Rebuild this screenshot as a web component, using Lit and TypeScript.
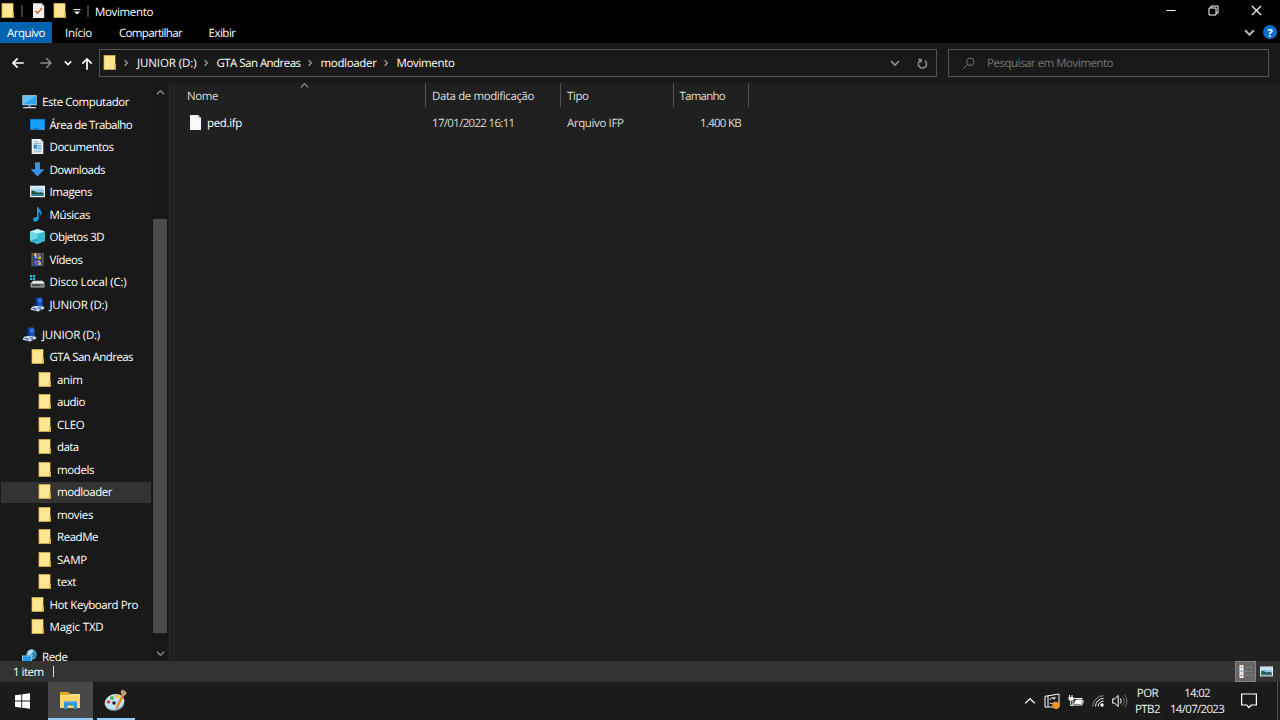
import { LitElement, html, svg, css, nothing } from "lit";
import type { TemplateResult } from "lit";
import { customElement, property } from "lit/decorators.js";
import { classMap } from "lit/directives/class-map.js";

const FONT = '11.5px "Open Sans", "Noto Sans", sans-serif';

const ruler = document.createElement("canvas").getContext("2d")!;

/** Tracking that makes `text` advance over `width` pixels. */
function tracking(text: string, width: number) {
  ruler.font = FONT;
  return (width - ruler.measureText(text).width) / text.length;
}

function label(text: string, width: number, cls = "") {
  return html`<span
    class="label ${cls}"
    style="letter-spacing:${tracking(text, width).toFixed(3)}px"
    >${text}</span
  >`;
}

/** Small colour icons, all drawn in a 15 by 15 box. */
const ICONS: Record<string, TemplateResult> = {
  folder: svg`
    <path d="M1.500 0H13.500V9h.5v6H1.500z" fill="#b8932c"/>
    <path d="M2.200.7H13v8.700h-.9v4.900H2.200z" fill="#ffe695"/>
    <path d="M2.200.7h1v13.600h-1z" fill="#f6d468"/>
    <path d="M12.200 9.800h1.300v4.500h-1.300z" fill="#f3cb52"/>`,
  computer: svg`
    <path d="M.3 1.200h14.400v10H.3z" fill="#a9ddf8"/>
    <path d="M1 2h13v8.400H1z" fill="#2fa5ec"/>
    <path d="M1 10.400V2h13z" fill="#62c2f6"/>
    <path d="M6 11.200h3v1.600H6z" fill="#7f97a5"/>
    <path d="M1.500 13h12l1 1.200H.5z" fill="#c9d6dd"/>`,
  desktop: svg`
    <path d="M0 2h15v11H0z" fill="#0078d0"/>
    <path d="M.8 2.700h13.400v8.500H.8z" fill="#1a9dfa"/>
    <path d="M1.500 12h1M9.500 12h1M11.500 12h1M13 12h1" stroke="#bfe3ff" stroke-width=".9"/>`,
  document: svg`
    <path d="M1.700 0h9l2.600 2.700V15H1.700z" fill="#f2f4f5"/>
    <path d="M10.600 0v2.800h2.700z" fill="#a8b1b7"/>
    <path d="M3.700 2.600h4.600M3.700 4.400h8M3.700 11h8M3.700 12.800h8" stroke="#6fa6c8" stroke-width=".8"/>
    <path d="M3.500 5.600h3.800v4H3.500z" fill="#2b8ed0"/>
    <path d="M8 6.300h3.800M8 7.900h3.800M8 9.400h3.800" stroke="#3a91c9" stroke-width=".8"/>`,
  download: svg`<path d="M5 .3h5v7h4.400L7.500 14.600.6 7.300H5z" fill="#3593e3"/>`,
  picture: svg`
    <path d="M0 1.700h15v11.500H0z" fill="#e8edf0"/>
    <path d="M1.400 3h12.200v8.800H1.400z" fill="#8fc9ee"/>
    <path d="M1.400 3h12.200v2.500H1.400z" fill="#c9e4f5"/>
    <path d="M1.400 6.500q3.500.3 6.200 2.200 3.600-1.100 6 .3v2.800H1.400z" fill="#24553f"/>
    <path d="M1.400 10.200h12.200v1.600H1.400z" fill="#3e7fa8"/>`,
  music: svg`
    <path d="M7 .2h1.600c.3 2.600 3.500 3.400 3.100 6.800-.1 1-.5 1.800-1.100 2.500.6-2.500-.4-3.900-1.900-4.400v6.500c0 1.800-1.500 3.100-3.300 3.100-1.500 0-2.400-.8-2.400-1.900C3 11 4.600 9.900 7 10z" fill="#1b9bf2"/>`,
  cube: svg`
    <path d="M7.500 0 15 2.400v9.700L7.500 15 0 12.100V2.400z" fill="#39b9d6"/>
    <path d="M0 2.400 7.500 0 15 2.400 7.500 4.800z" fill="#c9f3fa"/>
    <path d="M0 2.400 7.500 4.800V15L0 12.100z" fill="#6fd7ea"/>
    <path d="M0 12.100 7.500 9V15z" fill="#2ba8c9"/>`,
  video: svg`
    <path d="M1 .7h13v13.800H1z" fill="#3a3a3a"/>
    <path d="M2.300 1v13M12.700 1v13" stroke="#999" stroke-width="1" stroke-dasharray="1 1.300"/>
    <path d="M4 1.300h7v5.700H4zM4 8h7v5.700H4z" fill="#2f5fd0"/>
    <path d="M4 1.300h3l-1 3H4zM8.500 4.500H11V7H8z" fill="#e3b23c"/>
    <path d="M7.500 1.500h3v2h-3zM5 9h2.500v2H5z" fill="#d4502e"/>
    <path d="M8.500 10.500H11V13H8.500z" fill="#e9c25a"/>
    <path d="M5 4.500h2V6H5zM8 8.500h2V10H8z" fill="#8db6f0"/>`,
  drive: svg`
    <path d="M0 1h2.200v2.200H0zM2.900 1h2.200v2.200H2.900zM0 3.900h2.200v2.200H0zM2.900 3.900h2.200v2.200H2.900z" fill="#15c3ea"/>
    <path d="M3.200 6.700h9.300L14.500 9H1z" fill="#e4e6e7"/>
    <path d="M.7 9h13.800v4.500H.7z" fill="#b9bdbf"/>
    <path d="M1.600 10h12v2.500h-12z" fill="#4c5052"/>
    <path d="M10.500 10.800h1.700v1h-1.700z" fill="#45e04e"/>`,
  usb: svg`
    <path d="M5.300 1.200 10.500 0l2 1.500.3 7.700-6.500 1.200z" fill="#1c50b8"/>
    <path d="M5.300 1.200 7 2l.5 8-1.200.4L4 9z" fill="#0b2c78"/>
    <path d="M8 2.200l3.500-.8.3 3.500-3.600.8z" fill="#3c78dc"/>
    <path d="M2 9.800l4-.8 7.500.4 1 2-6.500 3L.5 12.800z" fill="#cdd9ec"/>
    <path d="M2.500 11.500h3M7.500 11h3.500M4.500 13.300l2-1M9.500 12.800l2-.6" stroke="#2a55a8" stroke-width="1.200"/>`,
  network: svg`
    <circle cx="9.500" cy="5.500" r="5.200" fill="#4c9fc6"/>
    <path d="M6 2.500Q9-.5 11.500 1L9 5.500 5.500 6z" fill="#b6dff0"/>
    <path d="M12 3q2 2 1.500 5l-2.500 1z" fill="#2b6f9a"/>
    <path d="M0 6.500h10V13H0z" fill="#8fd3f7"/>
    <path d="M.8 7.300h8.400v5H.8z" fill="#249ae6"/>`,
  file: svg`
    <path d="M2 0h8l3 3v12H2z" fill="#f7f8f8"/>
    <path d="M10 0v3h3z" fill="#b4b8ba"/>`,
  check: svg`
    <path d="M2 .2h8.800l2.400 2.500V15H2z" fill="#f3f1ef"/>
    <path d="M10.800.2v2.500h2.400z" fill="#a8a8a8"/>
    <path d="m4.200 7.700 2.300 2.600 4.700-5.300" fill="none" stroke="#e8602c" stroke-width="1.400"/>`,
  details: svg`
    <path d="M1.500 1h4v13h-4z" fill="#eee"/>
    <path d="M2.700 2.500h1.600v1.600H2.700z" fill="#999"/>
    <path d="M2.700 6.500h1.600v1.600H2.700z" fill="#4a8fd0"/>
    <path d="M2.700 10.700h1.600v1.600H2.700z" fill="#d2553e"/>
    <path d="M7.300 3.500h3M11.500 3.500h3M7.300 7.500h3M11.500 7.500h3M7.300 11.500h3M11.500 11.500h3" stroke="#8f8f8f" stroke-width=".8"/>`,
};

function icon(name: string, size = 15) {
  return html`<svg class="icon" width=${size} height=${size} viewBox="0 0 15 15">
    ${ICONS[name]}
  </svg>`;
}

function chevron(dir: "up" | "down" | "right", size: number, weight = 1.3) {
  const d = {
    up: "M1 7 5 3l4 4",
    down: "M1 3l4 4 4-4",
    right: "M3.300 1.500 6.800 5 3.300 8.500",
  }[dir];
  return html`<svg class="line" width=${size} height=${size} viewBox="0 0 10 10">
    <path d=${d} stroke-width=${weight} />
  </svg>`;
}

interface TreeItem {
  text: string;
  icon: string;
  level: number;
  width: number;
  selected?: boolean;
}

const TREE: TreeItem[][] = [
  [
    { text: "Este Computador", icon: "computer", level: 0, width: 87 },
    { text: "Área de Trabalho", icon: "desktop", level: 1, width: 82.5 },
    { text: "Documentos", icon: "document", level: 1, width: 64 },
    { text: "Downloads", icon: "download", level: 1, width: 55.5 },
    { text: "Imagens", icon: "picture", level: 1, width: 42.5 },
    { text: "Músicas", icon: "music", level: 1, width: 40.5 },
    { text: "Objetos 3D", icon: "cube", level: 1, width: 54.5 },
    { text: "Vídeos", icon: "video", level: 1, width: 33 },
    { text: "Disco Local (C:)", icon: "drive", level: 1, width: 77 },
    { text: "JUNIOR (D:)", icon: "usb", level: 1, width: 58 },
  ],
  [
    { text: "JUNIOR (D:)", icon: "usb", level: 0, width: 58 },
    { text: "GTA San Andreas", icon: "folder", level: 1, width: 83.5 },
    { text: "anim", icon: "folder", level: 2, width: 25.5 },
    { text: "audio", icon: "folder", level: 2, width: 28 },
    { text: "CLEO", icon: "folder", level: 2, width: 27.5 },
    { text: "data", icon: "folder", level: 2, width: 21.5 },
    { text: "models", icon: "folder", level: 2, width: 37 },
    { text: "modloader", icon: "folder", level: 2, width: 55 },
    { text: "movies", icon: "folder", level: 2, width: 36 },
    { text: "ReadMe", icon: "folder", level: 2, width: 41 },
    { text: "SAMP", icon: "folder", level: 2, width: 30 },
    { text: "text", icon: "folder", level: 2, width: 19 },
    { text: "Hot Keyboard Pro", icon: "folder", level: 1, width: 88.5 },
    { text: "Magic TXD", icon: "folder", level: 1, width: 54 },
  ].map((item) => ({ ...item, selected: item.text === "modloader" })),
  [{ text: "Rede", icon: "network", level: 0, width: 25.5 }],
];

const shared = css`
  :host {
    box-sizing: border-box;
    font: 11.5px/16px "Open Sans", "Noto Sans", sans-serif;
    color: #fff;
  }

  * {
    box-sizing: border-box;
  }

  /* Optical centring: the face sits high in its line box. */
  .label {
    display: block;
    flex: none;
    margin: 1px 0 -1px;
    white-space: pre;
    text-rendering: geometricPrecision;
  }

  .icon,
  .line {
    display: block;
    flex: none;
  }

  .line {
    fill: none;
    stroke: currentColor;
  }
`;

@customElement("explorer-ribbon")
export class ExplorerRibbon extends LitElement {
  static styles = [
    shared,
    css`
      :host {
        display: block;
        height: 43px;
        background: #000;
      }

      .title,
      .tabs {
        display: flex;
        align-items: center;
      }

      .title {
        height: 22px;
        padding-bottom: 1px;
      }

      .title .label {
        margin: 2px 0 -2px 6px;
      }

      .mark {
        width: 2px;
        height: 12px;
        margin-left: 6px;
        background: #3c3c3c;
      }

      .check {
        margin-left: 8px;
      }

      .folder {
        margin-left: 6px;
      }

      .customize {
        margin: 2px 0 0 6px;
      }

      .controls {
        display: flex;
        align-items: center;
        gap: 32px;
        margin-left: auto;
        padding-right: 18px;
      }

      .controls .line {
        margin-bottom: 1px;
      }

      .tabs {
        height: 21px;
      }

      .tab {
        display: grid;
        place-items: center;
        height: 21px;
      }

      .tab--file {
        width: 52px;
        background: #0063b1;
      }

      .tab--home {
        width: 53px;
      }

      .tab--share {
        width: 91px;
      }

      .tab--view {
        width: 52px;
      }

      .aside {
        display: flex;
        align-items: center;
        gap: 8px;
        margin-left: auto;
        padding: 0 3px 1px 0;
        color: #b5b5b5;
      }

      .help {
        display: grid;
        place-items: center;
        width: 14px;
        height: 14px;
        border-radius: 50%;
        background: #0a6fce;
        color: #fff;
        font-size: 11px;
        font-weight: 700;
      }
    `,
  ];

  render() {
    return html`
      <div class="title">
        ${icon("folder")}
        <span class="mark"></span>
        <span class="check">${icon("check")}</span>
        <span class="folder">${icon("folder")}</span>
        <svg class="line customize" width="8" height="6" viewBox="0 0 8 6">
          <path d="M.5.600h7" />
          <path d="M1 2.500h6L4 5.500z" fill="currentColor" stroke="none" />
        </svg>
        <span class="mark"></span>
        ${label("Movimento", 58)}
        <div class="controls">
          <svg class="line" width="10" height="10" viewBox="0 0 10 10"><path d="M.5 5.500h9" /></svg>
          <svg class="line" width="11" height="11" viewBox="0 0 11 11">
            <path d="M1 3h7v7H1zM3 3V1h7v7H8" />
          </svg>
          <svg class="line" width="11" height="11" viewBox="0 0 11 11">
            <path d="m1 1 9 9M10 1l-9 9" stroke-width="1.200" />
          </svg>
        </div>
      </div>
      <div class="tabs">
        <div class="tab tab--file">${label("Arquivo", 38)}</div>
        <div class="tab tab--home">${label("Início", 27)}</div>
        <div class="tab tab--share">${label("Compartilhar", 63)}</div>
        <div class="tab tab--view">${label("Exibir", 27)}</div>
        <div class="aside">
          ${chevron("down", 11, 1.9)}
          <span class="help">?</span>
        </div>
      </div>
    `;
  }
}

@customElement("explorer-address")
export class ExplorerAddress extends LitElement {
  static styles = [
    shared,
    css`
      :host {
        display: flex;
        align-items: flex-start;
        height: 40px;
        padding: 6px 11px 0 12px;
        background: #191919;
      }

      .nav {
        display: flex;
        align-items: center;
        width: 87px;
        height: 28px;
      }

      .nav__forward {
        margin-left: 16px;
        color: #8a8a8a;
      }

      .nav__recent {
        margin-left: 12px;
      }

      .nav__up {
        margin: 2px 0 0 9px;
      }

      .path,
      .search {
        display: flex;
        align-items: center;
        height: 28px;
        border: 1px solid #535353;
      }

      .path {
        width: 838px;
        padding-left: 2px;
      }

      .path > .icon {
        margin-bottom: 2px;
      }

      .crumb {
        display: flex;
        align-items: center;
        color: #fff;
      }

      .crumb .line {
        margin: 0 7px 0 5px;
        color: #9b9b9b;
      }

      .tools {
        display: flex;
        align-items: center;
        gap: 17px;
        margin-left: auto;
        padding-right: 8px;
        color: #929292;
      }

      .search {
        width: 321px;
        margin-left: 11px;
        padding-left: 13px;
        gap: 12px;
        color: #757575;
      }
    `,
  ];

  render() {
    const crumbs: [string, number][] = [
      ["JUNIOR (D:)", 59.5],
      ["GTA San Andreas", 84],
      ["modloader", 56],
      ["Movimento", 58],
    ];
    return html`
      <div class="nav">
        <svg class="line" width="12" height="12" viewBox="0 0 12 12">
          <path d="M11.700 6H1M5.700 1.300 1 6l4.700 4.700" stroke-width="1.700" />
        </svg>
        <svg class="line nav__forward" width="12" height="12" viewBox="0 0 12 12">
          <path d="M.3 6H11M6.300 1.300 11 6l-4.700 4.700" stroke-width="1.500" />
        </svg>
        <span class="nav__recent">${chevron("down", 8, 2)}</span>
        <svg class="line nav__up" width="12" height="12" viewBox="0 0 12 12">
          <path d="M6 11.700V1M1.300 5.700 6 1l4.700 4.700" stroke-width="1.700" />
        </svg>
      </div>
      <div class="path">
        ${icon("folder")}
        ${crumbs.map(
          ([text, width]) => html`
            <div class="crumb">${chevron("right", 8, 1.6)} ${label(text, width)}</div>
          `,
        )}
        <div class="tools">
          ${chevron("down", 10, 1.6)}
          <svg class="line" width="11" height="11" viewBox="0 0 11 11">
            <path d="M7.800 2.600A4.100 4.100 0 1 1 3.200 2.600M1.200 1.500H4v3" stroke-width="1.400" />
          </svg>
        </div>
      </div>
      <div class="search">
        <svg class="line" width="13" height="13" viewBox="0 0 13 13">
          <circle cx="8.200" cy="4.800" r="3.700" />
          <path d="M5.500 7.500.8 12.200" />
        </svg>
        ${label("Pesquisar em Movimento", 126)}
      </div>
    `;
  }
}

@customElement("explorer-tree")
export class ExplorerTree extends LitElement {
  @property({ attribute: false }) groups: TreeItem[][] = [];

  static styles = [
    shared,
    css`
      :host {
        display: flex;
        width: 170px;
        overflow: hidden;
        background: #191919;
        border-right: 1px solid #2b2b2b;
      }

      .tree {
        width: 152px;
        padding: 7.75px 1px 0;
      }

      .group {
        margin-bottom: 7.5px;
      }

      .row {
        display: flex;
        align-items: center;
        gap: 5px;
        height: 22.5px;
        padding-left: 21px;
      }

      .row .icon {
        margin-bottom: 1px;
      }

      .row--1 {
        padding-left: 28.5px;
      }

      .row--2 {
        padding-left: 36px;
      }

      .row--selected {
        background: #333;
        box-shadow: inset 0 1px #191919;
      }

      .scroll {
        display: flex;
        flex-direction: column;
        align-items: center;
        width: 16px;
        padding: 5px 0 3px;
        background: #171717;
        color: #858585;
      }

      .thumb {
        width: 14px;
        height: 414px;
        margin: 122px 0 auto;
        background: #4d4d4d;
      }
    `,
  ];

  render() {
    return html`
      <div class="tree">
        ${this.groups.map(
          (group) => html`
            <div class="group">
              ${group.map(
                (item) => html`
                  <div
                    class=${classMap({
                      row: true,
                      [`row--${item.level}`]: true,
                      "row--selected": !!item.selected,
                    })}
                  >
                    ${icon(item.icon)} ${label(item.text, item.width)}
                  </div>
                `,
              )}
            </div>
          `,
        )}
      </div>
      <div class="scroll">
        ${chevron("up", 9, 1.6)}
        <div class="thumb"></div>
        ${chevron("down", 9, 1.6)}
      </div>
    `;
  }
}

interface Column {
  title: string;
  titleWidth: number;
  value: string;
  valueWidth: number;
  cls: string;
  sorted?: boolean;
}

const COLUMNS: Column[] = [
  { title: "Nome", titleWidth: 31, value: "ped.ifp", valueWidth: 35, cls: "name", sorted: true },
  { title: "Data de modificação", titleWidth: 102, value: "17/01/2022 16:11", valueWidth: 82.5, cls: "date" },
  { title: "Tipo", titleWidth: 21.5, value: "Arquivo IFP", valueWidth: 56.5, cls: "type" },
  { title: "Tamanho", titleWidth: 45.5, value: "1.400 KB", valueWidth: 41, cls: "size" },
];

@customElement("explorer-files")
export class ExplorerFiles extends LitElement {
  static styles = [
    shared,
    css`
      :host {
        display: block;
        flex: 1;
        background: #202020;
      }

      .head,
      .row {
        display: flex;
      }

      .cell {
        position: relative;
        display: flex;
        align-items: center;
        height: 24px;
        padding-left: 6px;
        color: #dedede;
      }

      .head .cell {
        padding-top: 1px;
        border-right: 1px solid #535353;
      }

      .cell.name {
        width: 256px;
        padding-left: 17px;
      }

      .cell.date {
        width: 135px;
      }

      .cell.type {
        width: 112.500px;
      }

      .cell.size {
        width: 75.500px;
      }

      .row {
        padding-top: 4px;
      }

      .row .name {
        padding-left: 18px;
        gap: 4px;
        color: #fff;
      }

      .row .icon {
        margin-bottom: 2px;
      }

      .row .size {
        justify-content: flex-end;
        padding-right: 8px;
      }

      .sort {
        position: absolute;
        top: -2px;
        left: 130px;
        color: #a0a0a0;
      }
    `,
  ];

  render() {
    return html`
      <div class="head">
        ${COLUMNS.map(
          (col) => html`
            <div class="cell ${col.cls}">
              ${label(col.title, col.titleWidth)}
              ${col.sorted ? html`<span class="sort">${chevron("up", 9, 1.2)}</span>` : nothing}
            </div>
          `,
        )}
      </div>
      <div class="row">
        ${COLUMNS.map(
          (col) => html`
            <div class="cell ${col.cls}">
              ${col.cls === "name" ? icon("file") : nothing}
              ${label(col.value, col.valueWidth)}
            </div>
          `,
        )}
      </div>
    `;
  }
}

@customElement("explorer-status")
export class ExplorerStatus extends LitElement {
  static styles = [
    shared,
    css`
      :host {
        display: flex;
        align-items: center;
        height: 21px;
        padding-left: 13px;
        background: #333;
      }

      .caret {
        width: 1px;
        height: 11px;
        margin-left: 9px;
        background: #dcdcdc;
      }

      .views {
        display: flex;
        align-items: center;
        gap: 4px;
        margin-left: auto;
        padding-right: 7px;
      }

      .view {
        display: grid;
        place-items: center;
        width: 21px;
        height: 21px;
        background: #666;
        border: 1px solid #858585;
      }

      .views > .icon {
        margin-bottom: 1px;
      }
    `,
  ];

  render() {
    return html`
      ${label("1 item", 30.5)}
      <span class="caret"></span>
      <div class="views">
        <span class="view">${icon("details")}</span>
        ${icon("picture", 13)}
      </div>
    `;
  }
}

@customElement("task-bar")
export class TaskBar extends LitElement {
  static styles = [
    shared,
    css`
      :host {
        display: flex;
        height: 38px;
        background: #1b1b1b;
      }

      .button {
        display: grid;
        place-items: center;
        height: 38px;
      }

      .start {
        width: 48px;
        padding-right: 4px;
      }

      .app {
        width: 45px;
        padding-right: 1px;
        border-bottom: 2px solid #8fcbf5;
      }

      .app--active {
        background: #484848;
      }

      .app--paint {
        width: 38px;
        margin-left: 4px;
      }

      .tray {
        display: flex;
        align-items: center;
        margin-left: auto;
        padding-right: 2px;
      }

      .tray > .icon,
      .tray > .line {
        margin-right: 8px;
      }

      .stack {
        display: flex;
        flex-direction: column;
        align-items: center;
        color: #f3f3f3;
      }

      .lang {
        margin-left: -1px;
      }

      .clock {
        margin-left: 10px;
      }

      .tray > .note {
        margin: 0 20px 0 17px;
      }

      .edge {
        width: 1px;
        height: 38px;
        background: #555;
      }
    `,
  ];

  render() {
    return html`
      <div class="button start">
        <svg class="icon" width="15" height="16" viewBox="0 0 15 16">
          <path
            d="M0 2.300 6.300 1.400v6.200H0zM7.200 1.300 15 .2v7.400H7.200zM0 8.500h6.300v6.200L0 13.800zM7.200 8.500H15v7.300l-7.800-1.100z"
            fill="#fff"
          />
        </svg>
      </div>
      <div class="button app app--active">
        <svg class="icon" width="20" height="17" viewBox="0 0 20 17">
          <path d="M0 0h8l2 2h10v14H0z" fill="#e9a91f" />
          <path d="M0 3h20v13H0z" fill="#ffd766" />
          <path d="M0 3h9l1.500-1H20v2H0z" fill="#ffe08a" />
          <path d="M4 9.500h13V17h-3.500v-3.500h-6V17H4z" fill="#3191dd" />
          <path d="M4 9.500h13v1.300H4z" fill="#5cb2f0" />
        </svg>
      </div>
      <div class="button app app--paint">
        <svg class="icon" width="23" height="22" viewBox="0 0 23 22">
          <ellipse cx="10.500" cy="13" rx="10" ry="7.800" fill="#c4e2ef" transform="rotate(-18 10.500 13)" />
          <path d="M1.500 17q4 5 11 3 6.500-2.500 8-8 0 8-8 9.500-8 1.500-11-4.500z" fill="#7fb2ca" />
          <circle cx="10" cy="14" r="1.700" fill="#1b1b1b" />
          <circle cx="4.500" cy="13" r="1.800" fill="#dc4436" />
          <circle cx="8" cy="9" r="1.900" fill="#4cb34a" />
          <circle cx="13" cy="7.200" r="1.900" fill="#f0c233" />
          <path d="m11 21.500 1.500-5L18 5l2.500 1.200-6 11.500z" fill="#e8862a" />
          <path d="M16.500 2.500 18.500.5l4 2.500-.5 2.500-2 1.500-2.500-1.500z" fill="#c89a72" />
        </svg>
      </div>
      <div class="tray">
        ${chevron("up", 12, 1.1)}
        <svg class="line" width="16" height="16" viewBox="0 0 16 16">
          <path d="M1 3.300 15 1v13H1zM4 3v10.500" />
          <path d="M10.800 5.500A3 3 0 0 0 5.900 7M10.900 3.800v2h-2M5.900 9.800a3 3 0 0 0 4.900-1" />
          <circle cx="12" cy="12.300" r="3.600" fill="#f7941d" stroke="none" />
        </svg>
        <svg class="line" width="16" height="12" viewBox="0 0 16 12">
          <path d="M5 3.500h9v6.500H5zM15 5.300v3" />
          <path d="M8 5h5v3.500H6.500z" fill="currentColor" />
          <path d="M1.500 0v2.500M4 0v2.500M2.700 5v5.500h2.300" />
          <path d="M.5 2h4.500v2.500l-1 1H1.500l-1-1z" fill="currentColor" stroke="none" />
        </svg>
        <svg class="line" width="12" height="12" viewBox="0 0 12 12">
          <path d="M.7 11.500A10.800 10.800 0 0 1 11.500.7" stroke="#8b8b8b" />
          <path d="M3.500 11.500a8 8 0 0 1 8-8M6.200 11.500a5.300 5.300 0 0 1 5.300-5.300" />
          <circle cx="10" cy="10" r="1.700" fill="currentColor" stroke="none" />
        </svg>
        <svg class="line" width="16" height="14" viewBox="0 0 16 14">
          <path d="M.7 4.800h2L6.200 1.500v11L2.700 9.200h-2z" />
          <path d="M8.300 4.500a4 4 0 0 1 0 5" />
          <path d="M10.500 2.800a6.500 6.500 0 0 1 0 8.400M12.800 1a9.500 9.500 0 0 1 0 12" stroke="#777" />
        </svg>
        <div class="stack lang">${label("POR", 21.5)} ${label("PTB2", 25)}</div>
        <div class="stack clock">${label("14:02", 25.5)} ${label("14/07/2023", 54)}</div>
        <svg class="line note" width="16" height="16" viewBox="0 0 16 16">
          <path d="M.6 1h14.800v11h-5.200L8 14.500 5.800 12H.6z" stroke-width="1.200" />
        </svg>
        <span class="edge"></span>
      </div>
    `;
  }
}

@customElement("app-root")
export class AppRoot extends LitElement {
  static styles = css`
    :host {
      display: flex;
      flex-direction: column;
      width: 1280px;
      height: 720px;
      overflow: hidden;
      background: #202020;
    }

    .body {
      display: flex;
      flex: 1;
      min-height: 0;
    }
  `;

  render() {
    return html`
      <explorer-ribbon></explorer-ribbon>
      <explorer-address></explorer-address>
      <div class="body">
        <explorer-tree .groups=${TREE}></explorer-tree>
        <explorer-files></explorer-files>
      </div>
      <explorer-status></explorer-status>
      <task-bar></task-bar>
    `;
  }
}
